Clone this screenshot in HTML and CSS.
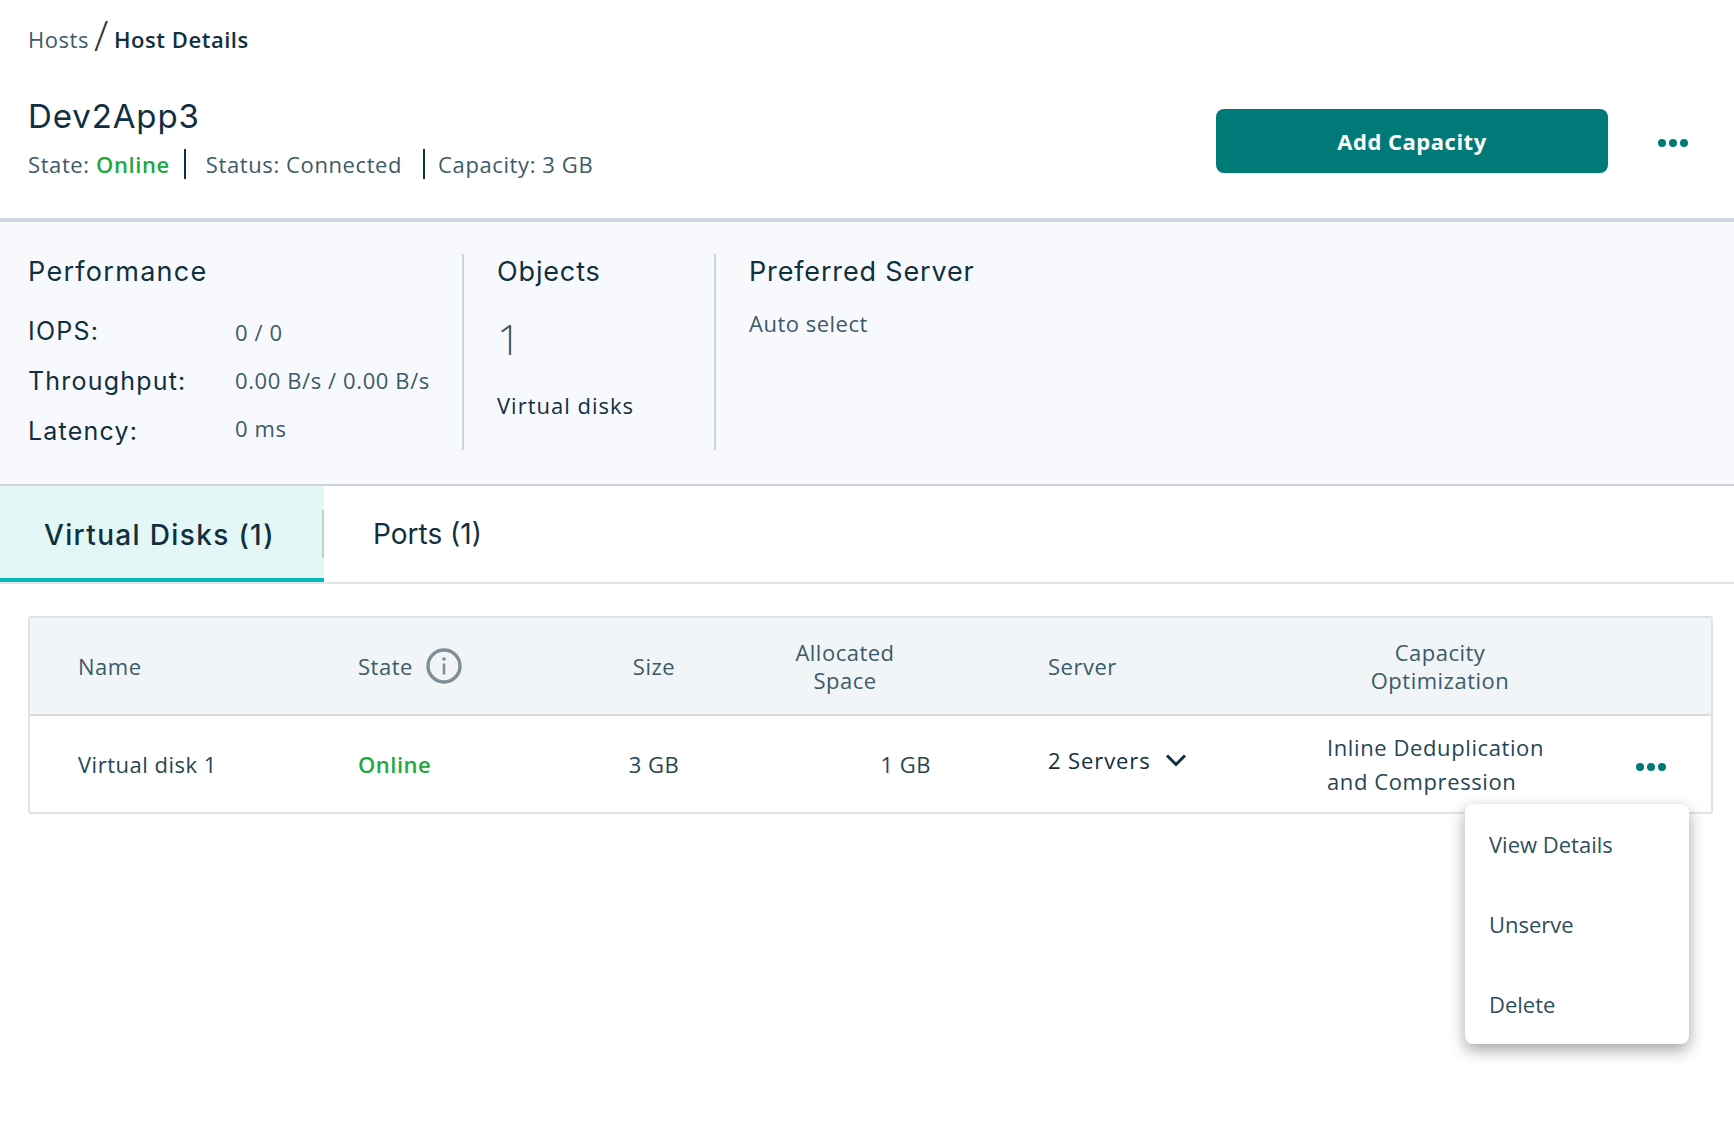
FILE: index.html
```html
<!DOCTYPE html>
<html lang="en">
<head>
<meta charset="utf-8">
<title>Host Details</title>
<link rel="stylesheet" href="styles.css">
</head>
<body>
<header class="page-head">
  <nav class="crumbs"><span class="crumb">Hosts</span><span class="crumb-sep">/</span><span class="crumb-current">Host Details</span></nav>
  <div class="title-row">
    <div class="title-block">
      <h1 class="title">Dev2App3</h1>
      <div class="meta">
        <span class="meta-item meta-first">State: <b class="online">Online</b></span>
        <span class="meta-item meta-second">Status: Connected</span>
        <span class="meta-item meta-third">Capacity: 3 GB</span>
      </div>
    </div>
    <button class="primary">Add Capacity</button>
    <span class="dots dots-head"><i></i><i></i><i></i></span>
  </div>
</header>

<section class="summary">
  <div class="panel panel-perf">
    <h2 class="panel-title">Performance</h2>
    <div class="stats">
      <div class="stat-labels">
        <div>IOPS:</div>
        <div>Throughput:</div>
        <div>Latency:</div>
      </div>
      <div class="stat-values">
        <div>0 / 0</div>
        <div>0.00 B/s / 0.00 B/s</div>
        <div>0 ms</div>
      </div>
    </div>
  </div>
  <div class="panel panel-obj">
    <h2 class="panel-title">Objects</h2>
    <div class="big-num">1</div>
    <div class="obj-label">Virtual disks</div>
  </div>
  <div class="panel panel-pref">
    <h2 class="panel-title">Preferred Server</h2>
    <div class="pref-value">Auto select</div>
  </div>
</section>

<div class="tabs">
  <div class="tab tab-active">Virtual Disks (1)</div>
  <div class="tab">Ports (1)</div>
</div>

<div class="table-wrap">
  <div class="table">
    <div class="row row-head">
      <div class="cell c-name">Name</div>
      <div class="cell c-state">State
        <svg class="info" viewBox="0 0 36 36" width="36" height="36" aria-hidden="true"><circle cx="18" cy="18" r="16" fill="none" stroke="#7f8f98" stroke-width="3.4"/><circle cx="18" cy="11" r="1.8" fill="#7f8f98"/><rect x="16.7" y="15.5" width="2.6" height="11" fill="#7f8f98"/></svg>
      </div>
      <div class="cell c-size">Size</div>
      <div class="cell c-alloc">Allocated<br>Space</div>
      <div class="cell c-server">Server</div>
      <div class="cell c-cap">Capacity<br>Optimization</div>
      <div class="cell"></div>
    </div>
    <div class="row row-body">
      <div class="cell c-name">Virtual disk 1</div>
      <div class="cell c-state"><b class="online">Online</b></div>
      <div class="cell c-size">3 GB</div>
      <div class="cell c-alloc-val">1 GB</div>
      <div class="cell c-server c-server-val">2 Servers
        <svg class="chev" viewBox="0 0 22 14" width="22" height="14" aria-hidden="true"><path d="M2 2.5 L11 11.5 L20 2.5" fill="none" stroke="#10303f" stroke-width="3"/></svg>
      </div>
      <div class="cell c-opt">Inline Deduplication<br>and Compression</div>
      <div class="cell c-more"><span class="dots"><i></i><i></i><i></i></span></div>
    </div>
  </div>
  <ul class="menu">
    <li>View Details</li>
    <li>Unserve</li>
    <li>Delete</li>
  </ul>
</div>
</body>
</html>
```
FILE: styles.css
```css
* { box-sizing: border-box; }
html, body { margin: 0; padding: 0; }
body {
  width: 1734px;
  height: 1148px;
  background: #fff;
  color: #274554;
  font-family: "Open Sans", "Liberation Sans", sans-serif;
  font-size: 22px;
  overflow: hidden;
}
.page-head { height: 222px; padding: 19px 0 0 28px; border-bottom: 4px solid #cfd4de; }
.crumbs { display: flex; align-items: center; height: 40px; gap: 5px; letter-spacing: .55px; }
.crumb { color: #3d5a68; }
.crumb-sep { font-size: 42px; font-weight: 300; color: #333; line-height: 36px; margin-top: -8px; }
.crumb-current { font-weight: 600; color: #10303f; }
.title-row { display: flex; align-items: flex-start; margin-top: 37px; padding-right: 46px; }
.title-block { flex: 1; }
.title { margin: 0; font: 400 33px/40px Inter, sans-serif; color: #10303f; letter-spacing: .9px; }
.meta { display: flex; align-items: center; margin-top: 13px; height: 30px; letter-spacing: .6px; color: #3d5a68; }
.meta-item { display: block; line-height: 30px; }
.meta-first { padding-right: 14px; border-right: 2px solid #10303f; }
.meta-second { padding: 0 21px 0 20px; border-right: 2px solid #10303f; margin-right: 13px; }
.online { color: #22a83f; font-weight: 600; }
.primary {
  width: 392px; height: 64px; margin-top: 13px; border: 0; border-radius: 8px;
  background: #007a78; color: #fff;
  font: 700 22px "Open Sans", sans-serif; letter-spacing: .5px;
}
.dots { display: inline-flex; gap: 3px; }
.dots i { display: block; width: 8px; height: 8px; border-radius: 50%; background: #007a78; }
.dots-head { margin: 43px 0 0 50px; }

.summary { display: flex; height: 264px; padding-top: 32px; background: #f8f9fd; border-bottom: 2px solid #cfd4d9; }
.panel { height: 196px; border-right: 2px solid #ccd3db; }
.panel-perf { width: 464px; padding-left: 28px; }
.panel-obj { width: 252px; padding-left: 33px; }
.panel-pref { flex: 1; padding-left: 33px; border-right: 0; }
.panel-title { margin: 1px 0 0; font: 400 27px/34px Inter, sans-serif; color: #10303f; letter-spacing: .85px; }
.panel-perf .panel-title { letter-spacing: 1.3px; }
.stats { display: flex; }
.stat-labels { width: 207px; margin-top: 17px; font: 400 25px/50px Inter, sans-serif; color: #10303f; letter-spacing: 1.2px; }
.stat-values { margin-top: 19px; line-height: 48px; color: #3d5a68; letter-spacing: .6px; }
.big-num { font: 300 42px/50px "Open Sans", sans-serif; color: #3d5a68; margin-top: 25px; }
.obj-label { margin-top: 26px; font-weight: 500; color: #10303f; letter-spacing: 1px; }
.pref-value { margin-top: 19px; color: #3d5a68; letter-spacing: .5px; }

.tabs { display: flex; height: 98px; border-bottom: 2px solid #e2e4e6; }
.tab { display: flex; align-items: center; padding: 0 44px 0 49px; height: 96px; font: 400 28px Inter, sans-serif; color: #10303f; }
.tab-active { position: relative; width: 324px; padding: 5px 0 0 44px; background: #e3f7f6; border-bottom: 4px solid #00b9b8; font-weight: 500; letter-spacing: 1.35px; }
.tab-active::after { content: ""; position: absolute; right: 0; top: 24px; width: 2px; height: 48px; background: #c5cfd3; }

.table-wrap { position: relative; padding: 32px 21px 0 28px; }
.table { border: 2px solid #dfe3e7; border-radius: 3px; }
.row { display: grid; grid-template-columns: 328px 233px 126px 256px 355px 224px 1fr; align-items: center; letter-spacing: .5px; }
.row-head { height: 98px; background: #f1f5f8; border-bottom: 2px solid #d8dce0; color: #3d5a68; font-weight: 500; line-height: 28px; }
.row-body { height: 96px; }
.c-name { padding-left: 48px; }
.c-state { display: flex; align-items: center; gap: 13px; }
.c-size, .c-alloc, .c-cap { text-align: center; }
.c-alloc-val { text-align: right; padding-right: 42px; }
.c-server { padding-left: 75px; }
.c-server-val { display: flex; align-items: center; gap: 14px; color: #10303f; font-weight: 500; letter-spacing: .9px; margin-top: -8px; }
.c-opt { margin-left: -1px; white-space: nowrap; line-height: 34px; letter-spacing: .6px; }
.c-more { text-align: right; padding-right: 45px; margin-top: -4px; }
.info { display: block; }
.chev { display: block; }

.menu {
  position: absolute; left: 1465px; top: 220px; width: 224px; height: 240px;
  margin: 0; padding: 0; list-style: none;
  background: #fff; border-radius: 8px;
  box-shadow: 0 6px 16px rgba(0,0,0,.36);
}
.menu li { height: 80px; padding-left: 24px; line-height: 80px; color: #2f4e5c; }
```
